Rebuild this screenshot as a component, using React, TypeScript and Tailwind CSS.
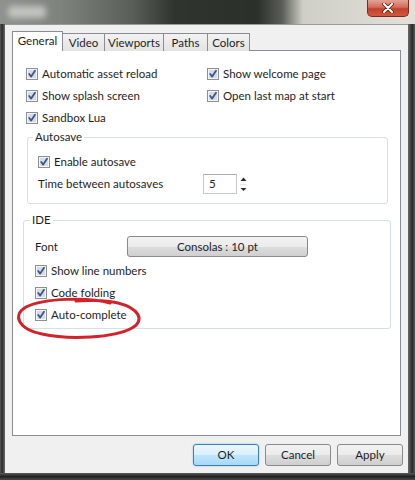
import React from 'react';

const tabs = [
  { label: 'General', w: 'w-[51px]' },
  { label: 'Video', w: 'w-[43px]' },
  { label: 'Viewports', w: 'w-[60px]' },
  { label: 'Paths', w: 'w-[45px]' },
  { label: 'Colors', w: 'w-[43px]' },
];

function Check() {
  return (
    <svg width="12" height="12" viewBox="0 0 12 12" className="shrink-0">
      <rect x="0.5" y="0.5" width="11" height="11" fill="#f5f5f5" stroke="#8e8f8f" />
      <rect x="2" y="2" width="8" height="8" fill="#d6dce4" />
      <path d="M3.2 6 L5.2 8.6 L9 2.8" stroke="#3a5590" strokeWidth="1.8" fill="none" strokeLinecap="round" strokeLinejoin="round" />
    </svg>
  );
}

function CheckRow({ label }: { label: string }) {
  return (
    <div className="flex items-center h-[22px] gap-[4px]">
      <Check />
      <span>{label}</span>
    </div>
  );
}

function WinButton({ label, primary }: { label: string; primary?: boolean }) {
  return (
    <button
      className={`w-[66px] h-[22px] rounded-[3px] border text-[#1e1e1e] ${
        primary
          ? 'border-[#3c7fb1] bg-[linear-gradient(#eaf6fd_0%,#d9f0fc_50%,#bee6fd_51%,#a7d9f5_100%)] shadow-[0_0_2px_#7ec4ea]'
          : 'border-[#8a8a8a] bg-[linear-gradient(#f2f2f2_0%,#ebebeb_50%,#dddddd_51%,#cfcfcf_100%)]'
      }`}
    >
      {label}
    </button>
  );
}

export default function App() {
  return (
    <div className="w-[415px] h-[480px] relative overflow-hidden font-['Lato',sans-serif] text-[11.5px] text-[#1e1e1e] bg-[#f0f0f0]">
      {/* glass title bar */}
      <div className="h-[24px] flex items-start justify-between bg-[linear-gradient(90deg,#8f938f_0%,#7e827d_15%,#595e58_32%,#2f342f_42%,#2b302b_62%,#5a5e58_68%,#cfcfc7_73%,#e2e0d8_100%)]">
        <div className="mt-[6px] ml-[8px] w-[38px] h-[12px] rounded bg-[#c2c4c0] blur-[3px]" />
        <div className="mr-[6px] w-[42px] h-[17px] rounded-b-[5px] border border-t-0 border-[#7a2a22] bg-[linear-gradient(#e3a594_0%,#d36b5a_45%,#c2412e_55%,#cf5a3e_100%)] flex items-center justify-center">
          <svg width="12" height="10" viewBox="0 0 12 10">
            <path d="M2 1 L10 9 M10 1 L2 9" stroke="#5a1a14" strokeWidth="3.6" strokeLinecap="round" />
            <path d="M2 1 L10 9 M10 1 L2 9" stroke="#ffffff" strokeWidth="2" strokeLinecap="round" />
          </svg>
        </div>
      </div>

      <div className="flex h-[449px]">
        <div className="w-[5px] bg-[linear-gradient(90deg,#5a5a5a,#2a2a2a_40%,#6a6a6a)]" />
        <div className="flex-1 flex flex-col border-t border-[#9a9a9a]">
          <div className="pt-[6px] pl-[7px] pr-[7px]">
            <div className="flex items-end h-[20px] -mb-px relative z-10">
              {tabs.map((t, i) =>
                i === 0 ? (
                  <div key={t.label} className={`${t.w} h-[20px] bg-white border border-b-0 border-[#898c95] flex items-center justify-center pb-[1px]`}>
                    {t.label}
                  </div>
                ) : (
                  <div key={t.label} className={`${t.w} -ml-px h-[18px] border border-b-0 border-[#898c95] bg-[linear-gradient(#f2f2f2,#e3e3e3)] flex items-center justify-center`}>
                    {t.label}
                  </div>
                )
              )}
            </div>
            <div className="h-[386px] bg-white border border-[#898c95] pt-[12px]">
              <div className="ml-[13px] grid grid-cols-[181px_1fr]">
                <CheckRow label="Automatic asset reload" />
                <CheckRow label="Show welcome page" />
                <CheckRow label="Show splash screen" />
                <CheckRow label="Open last map at start" />
                <CheckRow label="Sandbox Lua" />
              </div>

              <fieldset className="ml-[14px] mr-[12px] border border-[#d5dfe5] rounded-[3px] pl-[10px] pt-[6px] pb-[8px]">
                <legend className="-ml-[5px] px-[2px] leading-[16px]">Autosave</legend>
                <CheckRow label="Enable autosave" />
                <div className="flex items-center h-[22px]">
                  <span className="w-[165px]">Time between autosaves</span>
                  <div className="w-[34px] h-[20px] border border-[#c5c8cc] border-t-[#abadb3] flex items-center pl-[5px]">5</div>
                  <svg width="9" height="20" viewBox="0 0 9 20" className="ml-[2px]">
                    <path d="M1.5 7 L4.5 3.5 L7.5 7 Z" fill="#2a2a2a" />
                    <path d="M1.5 14 L4.5 17 L7.5 14 Z" fill="#2a2a2a" />
                    <line x1="1" y1="10.5" x2="8" y2="10.5" stroke="#e6e6e6" />
                  </svg>
                </div>
              </fieldset>

              <fieldset className="mt-[8px] ml-[10px] mr-[9px] border border-[#d5dfe5] rounded-[3px] pl-[11px] pt-[8px] pb-[2px]">
                <legend className="-ml-[5px] px-[2px] leading-[16px]">IDE</legend>
                <div className="flex items-center h-[21px]">
                  <span className="w-[92px]">Font</span>
                  <button className="w-[181px] h-[21px] rounded-[3px] border border-[#8a8a8a] bg-[linear-gradient(#f2f2f2_0%,#ebebeb_50%,#dddddd_51%,#cfcfcf_100%)]">
                    Consolas : 10 pt
                  </button>
                </div>
                <div className="mt-[3px]">
                  <CheckRow label="Show line numbers" />
                  <CheckRow label="Code folding" />
                  <CheckRow label="Auto-complete" />
                </div>
              </fieldset>
            </div>
          </div>
          <div className="mt-[8px] pr-[5px] flex justify-end gap-[6px]">
            <WinButton label="OK" primary />
            <WinButton label="Cancel" />
            <WinButton label="Apply" />
          </div>
        </div>
        <div className="w-[7px] bg-[linear-gradient(90deg,#6a6a6a,#2a2a2a_60%,#5a5a5a)]" />
      </div>
      <div className="h-[7px] bg-[linear-gradient(#5a5a5a,#222222_50%,#4a4a4a)]" />

      {/* hand-drawn annotation */}
      <svg width="130" height="50" viewBox="0 0 130 50" className="absolute left-[14px] top-[294px] pointer-events-none">
        <path
          d="M96 9 C75 3 30 4 12 13 C-2 21 4 35 28 40 C55 46 100 44 118 34 C132 26 124 14 104 9 C90 6 70 6 62 7"
          fill="none"
          stroke="#d2222a"
          strokeWidth="3"
          strokeLinecap="round"
        />
      </svg>
    </div>
  );
}
